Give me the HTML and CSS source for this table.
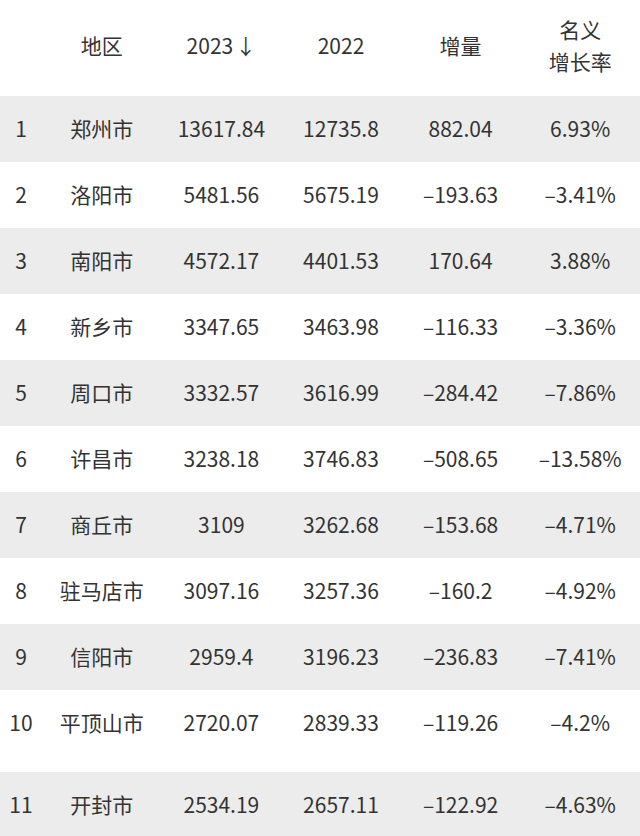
FILE: index.html
```html
<!DOCTYPE html>
<html lang="zh">
<head>
<meta charset="utf-8">
<link rel="stylesheet" href="styles.css">
</head>
<body>
<table class="data">
  <colgroup>
    <col class="c-rank"><col><col><col><col><col>
  </colgroup>
  <thead>
    <tr>
      <th></th>
      <th>地区</th>
      <th>2023<span class="arrow">↓</span></th>
      <th>2022</th>
      <th>增量</th>
      <th>名义<br>增长率</th>
    </tr>
  </thead>
  <tbody>
    <tr><td>1</td><td>郑州市</td><td>13617.84</td><td>12735.8</td><td>882.04</td><td>6.93%</td></tr>
    <tr><td>2</td><td>洛阳市</td><td>5481.56</td><td>5675.19</td><td>–193.63</td><td>–3.41%</td></tr>
    <tr><td>3</td><td>南阳市</td><td>4572.17</td><td>4401.53</td><td>170.64</td><td>3.88%</td></tr>
    <tr><td>4</td><td>新乡市</td><td>3347.65</td><td>3463.98</td><td>–116.33</td><td>–3.36%</td></tr>
    <tr><td>5</td><td>周口市</td><td>3332.57</td><td>3616.99</td><td>–284.42</td><td>–7.86%</td></tr>
    <tr><td>6</td><td>许昌市</td><td>3238.18</td><td>3746.83</td><td>–508.65</td><td>–13.58%</td></tr>
    <tr><td>7</td><td>商丘市</td><td>3109</td><td>3262.68</td><td>–153.68</td><td>–4.71%</td></tr>
    <tr><td>8</td><td>驻马店市</td><td>3097.16</td><td>3257.36</td><td>–160.2</td><td>–4.92%</td></tr>
    <tr><td>9</td><td>信阳市</td><td>2959.4</td><td>3196.23</td><td>–236.83</td><td>–7.41%</td></tr>
    <tr class="tall"><td>10</td><td>平顶山市</td><td>2720.07</td><td>2839.33</td><td>–119.26</td><td>–4.2%</td></tr>
    <tr><td>11</td><td>开封市</td><td>2534.19</td><td>2657.11</td><td>–122.92</td><td>–4.63%</td></tr>
  </tbody>
</table>
</body>
</html>
```

FILE: styles.css
```css
html, body {
  margin: 0;
  padding: 0;
  background: #ffffff;
}
body {
  font-family: "Noto Sans CJK SC", "Noto Sans", sans-serif;
  color: #333333;
  font-size: 21px;
  overflow: hidden;
}
.data {
  width: 640px;
  border-collapse: collapse;
  table-layout: fixed;
}
.c-rank {
  width: 42px;
}
.data th,
.data td {
  padding: 0;
  text-align: center;
  font-weight: 400;
  line-height: 32px;
  white-space: nowrap;
}
.data th {
  height: 96px;
  vertical-align: middle;
  padding-bottom: 6px;
  box-sizing: border-box;
}
.data td {
  height: 66px;
  vertical-align: top;
  padding-top: 16px;
  box-sizing: border-box;
}
.data tbody tr:nth-child(odd) {
  background: #ececec;
}
.data tbody tr.tall td {
  height: 82px;
}
.arrow {
  display: inline-block;
  margin-left: 2px;
}
```
